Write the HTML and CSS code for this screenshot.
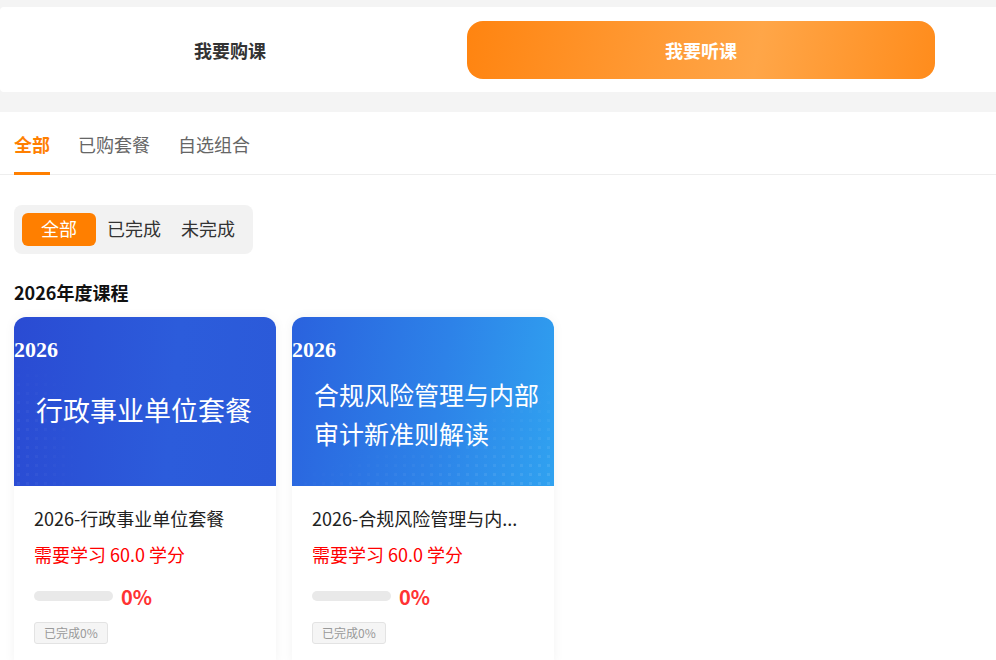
FILE: index.html
```html
<!DOCTYPE html>
<html lang="zh-CN">

<head>
  <meta charset="UTF-8">
  <meta name="viewport" content="width=device-width, initial-scale=1">
  <title>我要听课</title>
  <link rel="stylesheet" href="styles.css">
</head>

<body>
  <div class="mode-bar">
    <div class="mode-item">我要购课</div>
    <div class="mode-item active">我要听课</div>
  </div>

  <div class="main">
    <div class="tabs">
      <div class="tab active">全部</div>
      <div class="tab">已购套餐</div>
      <div class="tab">自选组合</div>
    </div>

    <div class="filter">
      <span class="filter-item active">全部</span>
      <span class="filter-item">已完成</span>
      <span class="filter-item">未完成</span>
    </div>

    <h2 class="group-title">2026年度课程</h2>

    <div class="cards">
      <div class="card">
        <div class="cover cover-1">
          <div class="cover-year">2026</div>
          <div class="cover-title">行政事业单位套餐</div>
        </div>
        <div class="card-body">
          <div class="card-title">2026-行政事业单位套餐</div>
          <div class="credit">需要学习 60.0 学分</div>
          <div class="progress-row">
            <div class="progress"><div class="progress-fill" style="width: 0%"></div></div>
            <span class="percent">0%</span>
          </div>
          <span class="badge">已完成0%</span>
        </div>
      </div>

      <div class="card">
        <div class="cover cover-2">
          <div class="cover-year">2026</div>
          <div class="cover-title">合规风险管理与内部<br>审计新准则解读</div>
        </div>
        <div class="card-body">
          <div class="card-title">2026-合规风险管理与内...</div>
          <div class="credit">需要学习 60.0 学分</div>
          <div class="progress-row">
            <div class="progress"><div class="progress-fill" style="width: 0%"></div></div>
            <span class="percent">0%</span>
          </div>
          <span class="badge">已完成0%</span>
        </div>
      </div>
    </div>
  </div>
</body>

</html>
```

FILE: styles.css
```css
* {
  box-sizing: border-box;
}

body {
  margin: 0;
  background: #f4f4f4;
  font-family: "Noto Sans CJK SC", "Liberation Sans", sans-serif;
  color: #333;
}

/* top switch: buy / listen */
.mode-bar {
  display: flex;
  margin: 7px 0 20px;
  padding: 14px 0 13px;
  background: #fff;
  border-radius: 4px 0 0 4px;
}

.mode-item {
  width: 460px;
  height: 58px;
  line-height: 58px;
  text-align: center;
  font-size: 18px;
  font-weight: bold;
  color: #333;
}

.mode-item.active {
  width: 468px;
  margin-left: 7px;
  border-radius: 16px;
  color: #fff;
  background: linear-gradient(100deg, #ff8410 0%, #ff9a35 40%, #ffa648 62%, #ff8c1c 100%);
}

.main {
  background: #fff;
  min-height: 560px;
  padding-bottom: 40px;
}

/* tabs */
.tabs {
  display: flex;
  gap: 28px;
  padding: 0 14px;
  border-bottom: 1px solid #eee;
}

.tab {
  padding-top: 20px;
  height: 62px;
  font-size: 18px;
  line-height: 25px;
  color: #666;
  border-bottom: 3px solid transparent;
}

.tab.active {
  color: #ff7f00;
  font-weight: bold;
  border-bottom-color: #ff7f00;
  margin-bottom: -1px;
  height: 63px;
}

/* status filter */
.filter {
  display: inline-flex;
  align-items: center;
  margin: 30px 0 0 14px;
  padding: 8px;
  height: 49px;
  background: #f2f2f2;
  border-radius: 8px;
}

.filter-item {
  padding: 0 10px 3px;
  height: 33px;
  line-height: 30px;
  font-size: 18px;
  color: #333;
}

.filter-item.active {
  padding: 0 19px 2px;
  margin-right: 1px;
  line-height: 31px;
  background: #ff7f00;
  color: #fff;
  border-radius: 6px;
}

.group-title {
  margin: 26px 0 12px 14px;
  font-size: 18px;
  line-height: 25px;
  font-weight: bold;
  color: #111;
}

/* course cards */
.cards {
  display: flex;
  gap: 16px;
  padding: 0 14px;
}

.card {
  width: 262px;
  border-radius: 12px 12px 0 0;
  background: #fff;
  box-shadow: 0 0 12px rgba(0, 0, 0, 0.05);
  overflow: hidden;
}

.cover {
  position: relative;
  height: 169px;
  padding-top: 20px;
  color: #fff;
}

.cover::after {
  content: "";
  position: absolute;
  inset: 0;
  background-image: radial-gradient(circle, rgba(255, 255, 255, 0.16) 1.4px, transparent 2px);
  background-size: 9px 9px;
}

.cover-1 {
  background: linear-gradient(95deg, #2a4bd3 0%, #2c5cdb 60%, #2b5ad9 100%);
}

.cover-1::after {
  -webkit-mask-image: linear-gradient(90deg, rgba(0, 0, 0, 0.35), transparent 25%),
    linear-gradient(180deg, transparent 25%, #000 60%);
  -webkit-mask-composite: source-in;
  mask-image: linear-gradient(90deg, rgba(0, 0, 0, 0.35), transparent 25%),
    linear-gradient(180deg, transparent 25%, #000 60%);
  mask-composite: intersect;
}

.cover-2 {
  background: linear-gradient(100deg, #2a62de 0%, #2d82e8 55%, #30a2f0 100%);
}

.cover-2::after {
  -webkit-mask-image: linear-gradient(160deg, transparent 60%, rgba(0, 0, 0, 0.7) 100%);
  mask-image: linear-gradient(160deg, transparent 60%, rgba(0, 0, 0, 0.7) 100%);
}

.cover-year {
  font-family: "Liberation Serif", "DejaVu Serif", serif;
  font-weight: bold;
  font-size: 22px;
  line-height: 26px;
}

.cover-title {
  position: relative;
  z-index: 1;
  padding-left: 22px;
}

.cover-1 .cover-title {
  margin-top: 29px;
  font-size: 27px;
  line-height: 36px;
}

.cover-2 .cover-title {
  margin-top: 12px;
  font-size: 25px;
  line-height: 39px;
}

.card-body {
  padding: 19px 20px 20px;
}

.card-title {
  font-size: 18px;
  line-height: 26px;
  color: #222;
  white-space: nowrap;
  overflow: hidden;
}

.credit {
  margin-top: 10px;
  font-size: 18px;
  line-height: 26px;
  color: #ff0000;
}

.progress-row {
  display: flex;
  align-items: center;
  margin-top: 16px;
  height: 26px;
}

.progress {
  width: 79px;
  height: 10px;
  border-radius: 5px;
  background: #e9e9e9;
  overflow: hidden;
}

.progress-fill {
  height: 100%;
  background: #ff7f00;
}

.percent {
  margin-left: 8px;
  font-size: 20px;
  font-weight: bold;
  color: #ff3333;
}

.badge {
  display: inline-block;
  margin-top: 13px;
  padding: 0 9px;
  height: 22px;
  line-height: 20px;
  font-size: 12px;
  color: #999;
  background: #f5f5f5;
  border: 1px solid #e3e3e3;
  border-radius: 3px;
}
```
